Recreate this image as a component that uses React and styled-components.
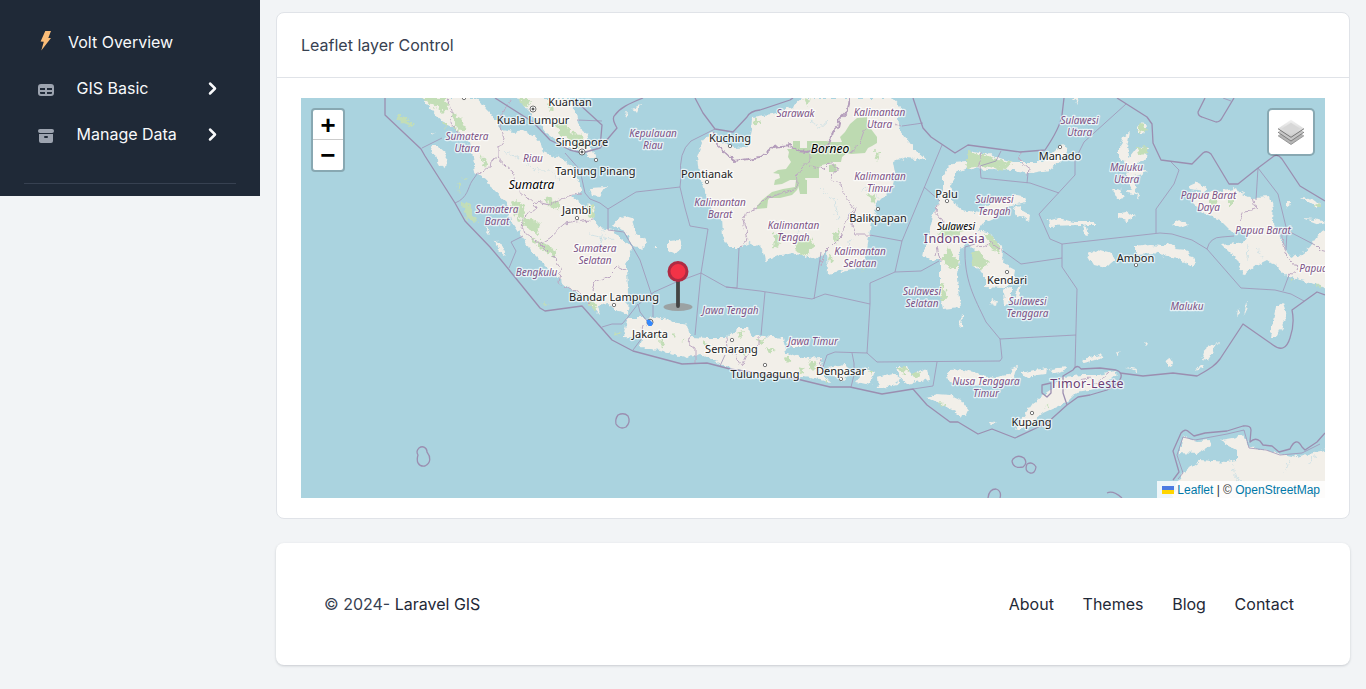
import React from "react";
import styled, { createGlobalStyle } from "styled-components";
import { HiTable, HiArchive, HiChevronRight } from "react-icons/hi";

const GlobalStyle = createGlobalStyle`
  *, *::before, *::after { box-sizing: border-box; }
  body {
    margin: 0;
    background: #f2f4f6;
    color: #374151;
    font: 400 16px/24px Inter, sans-serif;
    overflow: hidden;
  }
  a { text-decoration: none; }
`;

const Page = styled.div`
  display: flex;
  align-items: flex-start;
  height: 689px;
`;

const Sidebar = styled.nav`
  flex: 0 0 260px;
  height: 196px;
  padding: 19px 24px 0;
  background: #1f2937;
`;

const NavItem = styled.a`
  display: flex;
  align-items: center;
  height: 46px;
  padding: 0 11px 0 12px;
  color: #f8f9fb;
`;

const NavIcon = styled.span`
  display: flex;
  width: 20px;
  height: 20px;
  margin: ${(p) => (p.$brand ? "0 12px 2px 0" : "3px 20.5px 0 0")};
  color: #9ca3af;
`;

const NavLabel = styled.span`
  flex: 1;
`;

const Chevron = styled(HiChevronRight)`
  width: 25px;
  height: 25px;
`;

const Divider = styled.div`
  height: 1px;
  margin-top: 26px;
  background: #374151;
`;

const Main = styled.main`
  flex: 1;
  display: flex;
  flex-direction: column;
  gap: 24px;
  padding: 12px 16px 0;
`;

const Card = styled.section`
  height: 507px;
  background: #fff;
  border: 1px solid #e0e3e8;
  border-radius: 8px;
`;

const CardHeader = styled.header`
  height: 65px;
  padding: 20px 24px;
  border-bottom: 1px solid #e0e3e8;
`;

const MapFrame = styled.div`
  position: relative;
  height: 400px;
  margin: 20px 24px;
  overflow: hidden;
  background: #aad3df;
`;

const MapCanvas = styled.svg`
  display: block;
  width: 1024px;
  height: 400px;
`;

const ZoomControl = styled.div`
  position: absolute;
  top: 10px;
  left: 10px;
  width: 34px;
  border: 2px solid rgba(0, 0, 0, 0.2);
  border-radius: 4px;
  background: #fff;
  background-clip: padding-box;
`;

const ZoomButton = styled.a`
  display: block;
  height: 30px;
  border-bottom: ${(p) => (p.$first ? "1px solid #ccc" : "0")};
  color: #000;
  text-align: center;
  font: bold 26px/34px "Liberation Mono", monospace;
`;

const LayersControl = styled.div`
  position: absolute;
  top: 10px;
  right: 10px;
  display: grid;
  place-items: center;
  width: 48px;
  height: 48px;
  border: 2px solid rgba(0, 0, 0, 0.2);
  border-radius: 5px;
  background: #fff;
  background-clip: padding-box;
`;

const Attribution = styled.div`
  position: absolute;
  right: 0;
  bottom: 0;
  height: 17px;
  padding: 0 5px;
  background: rgba(255, 255, 255, 0.8);
  color: #333;
  font: 12px/18px "Liberation Sans", Arial, sans-serif;
  white-space: nowrap;
  a { color: #0078a8; }
  svg { margin-right: 3px; }
`;

const Footer = styled.footer`
  display: flex;
  align-items: center;
  justify-content: space-between;
  height: 122px;
  padding: 0 56px 0 48px;
  background: #fff;
  border-radius: 8px;
  box-shadow: 0 1px 3px rgba(31, 41, 55, 0.14), 0 1px 2px rgba(31, 41, 55, 0.06);
`;

const FooterLink = styled.a`
  color: #1f2937;
`;

const FooterLinks = styled.div`
  display: flex;
  gap: 28.7px;
`;

const Label = styled.text`
  font-family: "Noto Sans", sans-serif;
  text-anchor: middle;
  paint-order: stroke;
  stroke: rgba(255, 255, 255, 0.7);
  stroke-width: 2.6px;
  stroke-linejoin: round;
  font-size: ${(p) => ({ city: 11, region: 10, island: p.$size || 11, country: 12.5 }[p.$kind])}px;
  font-style: ${(p) => (p.$kind === "region" || p.$kind === "island" ? "italic" : "normal")};
  letter-spacing: ${(p) => (p.$kind === "country" ? "0.35px" : "0")};
  fill: ${(p) => ({ city: "#222", region: "#7c5285", island: "#000", country: "#6c3f75" }[p.$kind])};
`;

const LAND = [
  // Sumatra
  "422,98 432,110 442,122 457,130 468,140 473,157 475,173 487,180 493,190 507,203 513,223 522,237 533,253 547,267 563,282 580,297 590,304 600,315 598,306 607,304 613,307 620,312 627,315 628,293 627,267 628,258 632,248 623,240 613,230 600,228 593,220 595,205 584,206 573,197 582,190 575,170 563,160 543,152 540,140 523,130 513,132 503,130 487,110 477,98",
  // Malay peninsula
  "518,98 527,110 537,120 547,133 563,145 580,153 590,150 588,137 578,123 575,110 570,98",
  // Bangka, Belitung
  "612,227 618,219 625,216 632,218 635,233 648,242 645,249 633,247 625,232",
  "668,240 680,239 683,247 675,254 668,251",
  // Borneo
  "803,98 793,107 777,113 753,117 752,130 748,147 733,148 720,140 710,132 702,143 697,157 699,173 705,193 713,210 722,217 723,237 730,248 740,248 750,243 763,250 765,262 780,255 797,253 815,260 827,250 828,275 847,270 862,267 867,250 870,230 873,220 877,203 890,190 895,173 893,162 907,158 927,160 913,147 900,130 898,117 900,107 892,98",
  // Sulawesi
  "955,162 966,161 972,152 983,153 1013,162 1043,162 1054,152 1063,143 1068,147 1060,162 1050,170 1030,173 1013,170 967,168 955,173 950,190 953,203 962,210 980,213 990,202 1005,198 1017,195 1027,197 1025,203 1007,207 995,218 983,223 978,230 990,233 1003,250 1002,263 1015,270 1013,283 1003,288 985,287 985,273 972,265 975,250 967,242 960,250 957,277 960,308 943,310 940,293 940,260 935,260 923,257 925,247 933,217 937,203 943,190 943,177 950,165",
  // Java, Madura
  "628,318 647,318 657,317 667,320 677,323 688,325 692,337 707,338 727,338 738,328 748,328 752,335 783,338 787,353 803,358 823,357 822,370 830,382 803,377 780,377 757,375 730,368 713,360 700,354 687,358 660,350 640,348 642,338 623,337 625,328",
  "786,341 806,340 801,346 788,346",
  // Lesser Sunda islands
  "827,368 844,365 852,373 842,382 832,375",
  "855,382 867,368 875,372 870,385",
  "877,377 893,373 900,378 897,385 878,389",
  "897,367 907,367 911,376 927,368 929,379 907,384 900,378",
  "945,375 950,371 963,370 980,375 997,377 1013,374 1010,380 996,384 980,385 950,382",
  "1012,368 1018,366 1015,376 1010,376", "1021,373 1034,370 1047,368 1046,374 1024,377", "1049,369 1067,367 1065,371 1052,375",
  "925,397 937,394 950,395 961,400 968,410 965,417 950,410 938,403",
  "989,423 995,420 993,424",
  "1015,430 1033,403 1050,390 1063,377 1082,375 1100,375 1113,371 1117,374 1100,388 1077,392 1067,402 1043,413 1027,427",
  // Halmahera and the Moluccas
  "1130,132 1123,138 1119,150 1119,160 1125,162 1128,183 1140,200 1132,177 1148,172 1131,166 1147,158 1148,147 1137,148 1130,157 1127,148",
  "1138,126 1143,121 1147,126 1144,134 1138,134",
  "1118,213 1127,212 1135,217 1127,220 1118,218",
  "1172,224 1180,219 1188,225 1180,228",
  "1112,188 1121,190 1124,198 1117,199", "1128,190 1135,190 1134,194 1127,193",
  "1048,221 1058,218 1075,222 1095,222 1098,225 1079,225 1049,226", "1083,225 1086,226 1088,236 1085,234",
  "1087,254 1097,250 1112,254 1115,260 1106,267 1093,264",
  "1135,247 1150,245 1163,246 1168,243 1176,249 1187,250 1196,263 1193,267 1177,258 1153,253 1135,254",
  "1014,208 1020,206 1023,211 1030,215 1029,221 1021,215 1016,216",
  "1003,289 1011,286 1011,300 1004,307", "992,299 996,301 995,306 991,304", "1016,290 1021,285 1019,298 1014,304",
  "961,313 963,315 962,328 960,326",
  "1238,309 1240,314 1237,317", "1247,302 1249,304 1244,315", "1282,303 1286,315 1282,326 1277,337 1270,337 1273,320 1276,307",
  "1202,360 1206,347 1219,343 1214,350 1207,361", "1195,370 1204,364 1202,368", "1082,361 1088,357 1101,355 1104,358 1092,361 1084,363",
  "1126,367 1137,369 1136,371", "1166,360 1171,358 1173,364 1169,366", "1144,343 1148,342 1147,346", "1116,352 1120,354 1117,356",
  // Papua
  "1188,186 1197,182 1206,186 1205,191 1190,189",
  "1193,203 1196,192 1210,193 1233,188 1253,198 1270,197 1273,207 1272,220 1280,237 1287,253 1297,258 1310,247 1320,233 1329,229 1329,290 1310,282 1290,278 1277,267 1267,260 1257,265 1243,275 1238,260 1223,245 1243,242 1250,233 1243,230 1233,233 1220,220 1203,213",
  "1300,197 1311,198 1320,205 1316,207", "1302,218 1315,219 1325,222 1318,224", "1286,202 1290,202 1289,207 1286,206",
  // Australia
  "1178,452 1185,437 1197,441 1210,440 1211,445 1198,453",
  "1170,502 1182,473 1200,460 1227,462 1237,460 1237,450 1220,440 1232,438 1243,435 1250,447 1277,453 1297,457 1310,453 1329,449 1329,502",
  // Islands west of Sumatra
  "430,147 438,147 447,155 445,168 440,165", "484,227 491,232 489,234", "494,238 500,243 506,256 498,249", "432,131 435,132 432,134", "590,188 607,187 600,196 592,195",
  "587,148 593,151 596,158 588,157", "526,135 534,136 532,142 527,141", "638,246 643,246 641,249", "655,245 659,245 657,248", "624,113 628,112 626,116", "633,108 640,105 637,113", "1073,98 1077,98 1078,104",
];

const GREEN = [
  "422,98 445,98 449,106 443,113 436,107", "452,112 460,118 466,128 461,132 455,127", "442,122 447,122 446,129",
  "397,115 402,115 414,125 411,127 399,121", "463,203 468,202 478,222 469,221 464,214", "458,181 461,184 459,193", "462,177 468,178 465,180",
  "511,204 516,200 524,206 525,217 518,220", "520,220 531,218 540,224 538,234 527,229", "530,238 542,242 556,250 555,257 541,249",
  "546,198 550,197 560,205 558,210 549,207", "479,152 488,164 486,168", "587,207 594,205 595,219 588,216",
  "518,98 528,98 531,103 525,107", "556,124 566,122 569,132 580,134 588,146 578,148 570,139 560,136", "547,103 554,108 551,111", "584,298 589,296 597,306 595,310",
  "775,232 783,235 778,248 773,246", "797,240 811,239 814,246 806,257 796,250", "803,98 811,100 807,107", "833,234 840,230 836,245", "875,151 880,153 876,160", "866,194 877,197 873,203", "755,118 760,122 754,125", "829,255 833,258 830,264", "861,264 866,265 863,272",
  "966,163 969,152 982,154 1002,161 1012,162 1005,170 983,166 967,168", "938,233 947,226 964,232 958,236 944,237", "985,234 992,236 1001,248 999,253 991,249", "942,259 948,247 957,258 955,268 946,265", "973,252 978,249 988,263 979,269 972,263", "940,286 944,283 947,301 941,301", "944,260 959,260 957,268 951,268",
  "1210,199 1216,199 1217,205 1210,205", "1229,201 1233,201 1233,204 1229,204", "1317,203 1321,204 1320,207 1316,207", "1138,124 1143,123 1146,129 1141,133 1138,130", "1137,148 1148,147 1147,153 1138,154", "1290,278 1295,280 1292,282", "1314,284 1323,286 1320,288",
  "898,368 905,367 908,371 902,374", "913,374 920,372 922,377 914,379", "868,371 874,371 872,375", "938,403 945,404 944,406", "1046,406 1049,404 1044,411", "824,378 829,382 825,382", "541,303 548,304 546,306", "613,332 622,334 616,336",
  "660,340 666,343 662,348", "672,334 675,337 672,338", "682,338 685,339 683,342", "702,342 711,345 705,347", "735,333 744,331 740,337", "755,340 766,339 762,344", "764,347 777,350 770,353", "783,357 791,358 788,362", "808,360 818,364 812,370", "742,352 748,351 745,357", "798,367 805,369 799,373", "655,337 660,336 658,339",
];

// Inland Borneo parks have straight survey edges, so they stay undistorted.
const PARKS = [
  "842,142 840,137 845,132 850,124 857,118 867,117 867,128 871,129 877,137 877,143 872,146 868,148 865,153 851,154 847,153 842,157 841,162 833,162 822,165 822,166 819,167 819,178 805,178 806,182 800,183 797,190 792,195 780,198 766,198 772,194 768,200 767,208 757,209 757,206 762,200 772,192 783,189 795,187 796,180 790,180 782,184 774,185 775,180 780,178 779,174 773,173 778,170 786,169 791,162 788,157 789,152 787,149 793,149 793,141 800,141 800,148 807,148 807,141 826,141 832,142",
  "797,180 807,180 807,194 800,194", "829,165 836,164 837,172 829,172",
];

const LAND_BORDERS = [
  "M448 98 452 111 451 124 460 134 468 137",
  "M511 98 505 111 500 120 504 140 498 148 498 159 513 172 519 190 534 203 536 209 522 219 521 229 540 244 554 258 561 268 558 283 580 293 590 305",
  "M477 174 490 167 491 160 498 158",
  "M536 202 549 205 565 197 583 193", "M540 244 550 238 565 224 583 221 593 219",
  "M592 290 595 281 608 277 618 267 627 271",
  "M740 248 748 239 742 217 759 206 768 197 788 192 798 188 796 176 810 160 810 154",
  "M810 166 824 169 830 163 838 168 830 179 841 185 845 197 854 208 845 222 842 235 825 252 820 265",
  "M856 207 851 225 855 235 870 235", "M850 153 859 145 865 128", "M895 123 901 126",
  "M982 152 977 168", "M1021 152 1020 160 1029 168 1028 175", "M937 203 936 213 943 222 939 230 M935 255 937 246 940 261 M976 247 986 248 990 242 1003 251",
  "M1253 197 1256 209 1244 211 1239 222 M1281 232 1286 255 1297 268 1289 275", "M1315 245 1320 250 1328 252",
  "M640 338 643 326 648 324", "M691 336 690 345 695 348 695 361", "M727 338 728 349 735 355 741 366 747 353 759 346 759 337", "M823 357 819 366 827 372",
  "M1065 388 1078 380 1090 378 1095 384 1108 374",
];

const BORNEO_BORDER =
  "M713 133 717 145 727 154 735 161 760 157 773 147 790 145 798 151 807 152 828 147 832 133 838 127 840 118 848 110 850 96";

const THICK = [
  "M385 98V115L421 149 425 156 455 203 465 221 490 247 501 260 540 308 545 311 582 306 612 340 633 351 682 364 707 363 730 369 757 373 797 379 830 387 850 387 882 394 913 389 927 405 950 422 958 422 978 434 992 429 1015 438 1047 423 1067 405 1063 393 1063 376 1073 370C1076 365 1079 366 1081 369L1100 368 1116 370C1127 374 1119 384 1107 390L1090 395 1078 397 1067 405",
  "M1120 373 1143 376 1173 373 1197 376C1209 369 1215 366 1220 359L1243 324 1273 345Q1285 354 1290 338 1295 324 1292 310L1317 292 1325 295",
  "M495 98 533 122 550 140 570 150 582 153 600 148 617 128Q611 118 615 115C620 108 628 104 643 98",
  "M578 103 602 125 600 148", "M695 98 703 113 715 129 733 132 747 117Q750 111 760 110L790 100 793 98",
  "M913 98 923 128 931 137 955 153 968 145 1020 152 1045 150Q1060 128 1062 115L1064 98",
  "M1117 98 1147 117 1152 124 1153 143 1161 160 1192 164 1203 153Q1207 150 1211 154L1229 184H1238L1258 168 1274 156Q1278 154 1282 159L1300 186 1325 201",
  "M1205 98 1198 112Q1198 116 1202 117L1216 122Q1220 122 1222 118L1234 98",
  "M1173 480 1179 472 1173 451 1181 433Q1185 428 1189 432L1194 436 1205 433 1227 431 1243 426Q1251 425 1251 430L1250 442Q1255 437 1260 441L1263 445 1272 446 1279 452 1290 449Q1296 436 1302 447L1305 450 1317 442 1325 433",
  "M1042 385 1051 383 1051 393 1047 397 1042 393Z",
  "M618 415Q624 412 628 416 631 422 626 427 620 430 616 424 615 419 618 415Z",
  "M419 448C423 445 427 448 427 452 431 457 431 463 425 466 418 467 416 461 418 455 416 452 417 450 419 448Z",
  "M1013 459Q1018 454 1024 458 1028 463 1023 467 1013 469 1012 461Z", "M1027 464Q1033 461 1036 467 1035 474 1030 473 1024 471 1027 464Z", "M988 498Q989 489 996 489 1002 491 1000 498", "M1107 493Q1113 490 1122 498",
];

const THIN = [
  "M422 148 442 138", "M455 203C468 198 468 187 472 181L477 174", "M509 268 516 251 511 242 523 236",
  "M565 153 580 170 585 193 590 199 600 203 608 209 608 230 624 232 632 246 640 260 653 299 653 317",
  "M608 209 636 192 680 187 681 177Q678 152 691 141L715 129", "M680 187 685 208 690 226 708 229 701 273 695 335",
  "M577 120 602 121", "M739 248 737 288 726 287 701 273 674 283 654 292 639 304",
  "M726 287 760 291 812 299 825 294 870 304 870 283 895 272 902 241 942 145", "M821 252 814 299", "M870 235 902 241",
  "M924 187 940 201", "M895 272 921 271 939 261", "M870 304 867 353 877 362 1000 361 1002 358 1000 339 986 322C974 297 964 280 965 247L975 244",
  "M1000 339 1076 335", "M765 292 761 335", "M823 367 827 355 835 352 867 353", "M852 353Q855 362 854 375L851 387", "M937 362 933 386 913 389",
  "M902 126 923 123", "M1001 151 996 161 980 166 981 178 1030 183 1059 193", "M1028 173 1027 183",
  "M1126 104 1084 142 1075 160 1075 175 1039 214 1050 239 1062 244 1160 233 1172 234 1192 240 1207 249 1241 288 1275 290 1291 294 1304 301",
  "M1062 244 1062 267 1077 289 1075 368", "M1003 251 1021 264 1062 258", "M1170 161 1179 170 1174 184 1156 209 1156 233",
  "M1207 249Q1210 237 1222 237L1234 236", "M1258 168 1256 200", "M1258 168 1278 194 1287 231 1286 250", "M1290 232 1315 245",
  "M1289 275 1283 291",
  "M602 327 612 324 622 324 628 317 638 304 640 312 647 321", "M633 350 642 338", "M720 366 725 355", "M1223 98 1231 101",
  "M1178 479 1183 473 1177 455 1183 437 1195 440 1227 434 1244 430 1249 448 1266 450 1280 455 1302 453 1320 444",
];

const RIVERS = [
  "M504 152 520 158 537 170 551 170 560 180", "M545 148 553 155 565 158 572 170", "M585 252 600 245 603 230 M590 235 615 240", "M810 120 820 128 828 121",
  "M820 188 835 200 838 220", "M862 190 868 188 880 198", "M800 225 797 240 M778 220 782 238 M853 238 845 250", "M1248 245 1247 260 M1257 248 1262 258", "M1232 465 1236 478 1250 486 M1290 460 1285 472 M1315 455 1308 465",
];

const DOTS = [
  [533, 109, 1], [582, 152, 1], [596, 160], [577, 218], [614, 305], [730, 146], [707, 182], [878, 209], [947, 201], [1060, 147], [1007, 272], [1136, 265], [732, 340], [765, 365], [841, 379], [1032, 413], [464, 98],
];

const LABELS = [
  ["city", "Kuantan", 570, 106], ["city", "Kuala Lumpur", 533, 124], ["city", "Singapore", 582, 146], ["city", "Tanjung Pinang", 595.5, 175],
  ["city", "Jambi", 576.5, 214], ["city", "Bandar Lampung", 614, 301], ["city", "Jakarta", 650, 338], ["city", "Semarang", 731.5, 353],
  ["city", "Tulungagung", 765, 378], ["city", "Denpasar", 841, 375], ["city", "Kuching", 730, 142], ["city", "Pontianak", 707, 178],
  ["city", "Balikpapan", 878, 222], ["city", "Palu", 946.5, 197.5], ["city", "Manado", 1060, 160], ["city", "Kendari", 1007, 284],
  ["city", "Ambon", 1135.5, 261.5], ["city", "Kupang", 1031.5, 426],
  ["island", "Sumatra", 531.5, 189, 12], ["island", "Borneo", 830, 153, 12], ["island", "Sulawesi", 956, 230, 10],
  ["country", "Indonesia", 954.5, 243], ["country", "Timor-Leste", 1087, 388],
  ["region", "Sumatera", 467, 140], ["region", "Utara", 467, 152], ["region", "Riau", 533, 162],
  ["region", "Sumatera", 497, 213], ["region", "Barat", 497, 225], ["region", "Bengkulu", 536.5, 276],
  ["region", "Sumatera", 595, 252], ["region", "Selatan", 595, 264], ["region", "Kepulauan", 653, 137], ["region", "Riau", 653, 149],
  ["region", "Sarawak", 795.5, 117], ["region", "Kalimantan", 879.5, 116], ["region", "Utara", 879.5, 128],
  ["region", "Kalimantan", 720, 206], ["region", "Barat", 720, 218], ["region", "Kalimantan", 880, 180], ["region", "Timur", 880, 192],
  ["region", "Kalimantan", 793.5, 229], ["region", "Tengah", 793.5, 241], ["region", "Kalimantan", 860, 255], ["region", "Selatan", 860, 267],
  ["region", "Sulawesi", 1079.5, 124], ["region", "Utara", 1079.5, 136], ["region", "Sulawesi", 994.5, 202.5], ["region", "Tengah", 994.5, 214.5],
  ["region", "Sulawesi", 922, 295], ["region", "Selatan", 922, 307], ["region", "Sulawesi", 1027.5, 305], ["region", "Tenggara", 1027.5, 317],
  ["region", "Maluku", 1126.5, 170.5], ["region", "Utara", 1126.5, 182.5], ["region", "Papua Barat", 1208.5, 198.5], ["region", "Daya", 1208.5, 210.5],
  ["region", "Papua Barat", 1263, 234], ["region", "Papua", 1313.5, 272], ["region", "Maluku", 1187, 310],
  ["region", "Jawa Tengah", 730.5, 314], ["region", "Jawa Timur", 813, 345], ["region", "Nusa Tenggara", 986, 384.5], ["region", "Timur", 986, 396.5],
];

function MapArt() {
  return (
    <MapCanvas viewBox="301 98 1024 400">
      <defs>
        <filter id="coast" filterUnits="userSpaceOnUse" x="296" y="93" width="1034" height="410" colorInterpolationFilters="sRGB">
          <feTurbulence type="fractalNoise" baseFrequency="0.16" numOctaves="3" seed="4" />
          <feDisplacementMap in="SourceGraphic" scale="6.5" xChannelSelector="R" yChannelSelector="G" />
        </filter>
        <filter id="forest" filterUnits="userSpaceOnUse" x="296" y="93" width="1034" height="410" colorInterpolationFilters="sRGB">
          <feTurbulence type="fractalNoise" baseFrequency="0.25" numOctaves="3" seed="9" />
          <feDisplacementMap in="SourceGraphic" scale="8" xChannelSelector="R" yChannelSelector="G" />
        </filter>
      </defs>
      <g fill="#f2efe9" filter="url(#coast)">
        {LAND.map((p) => <polygon key={p} points={p} />)}
      </g>
      <g fill="#c3deb7" filter="url(#forest)">
        {GREEN.map((p) => <polygon key={p} points={p} />)}
      </g>
      <g fill="#bddab1">
        {PARKS.map((p) => <polygon key={p} points={p} />)}
      </g>
      <g fill="none" stroke="#b9d9e2" strokeWidth="0.6" filter="url(#forest)">
        {RIVERS.map((d) => <path key={d} d={d} />)}
      </g>
      <g fill="none" stroke="#bda8c2" strokeWidth="1" filter="url(#coast)">
        {LAND_BORDERS.map((d) => <path key={d} d={d} />)}
        <path d={BORNEO_BORDER} stroke="#b49dbb" strokeWidth="1.9" />
      </g>
      <g fill="none" stroke="#9f93b6" strokeWidth="0.8" strokeLinejoin="round">
        {THIN.map((d) => <path key={d} d={d} />)}
      </g>
      <g fill="none" stroke="#9b8eb0" strokeWidth="1.3" strokeLinejoin="round">
        {THICK.map((d) => <path key={d} d={d} />)}
      </g>
      {DOTS.map(([x, y, capital]) => (
        <g key={`${x}-${y}`} stroke="#555" strokeWidth="0.8" fill="#fff">
          <circle cx={x} cy={y} r={capital ? 3 : 1.7} />
          {capital && <circle cx={x} cy={y} r="1.1" fill="#444" />}
        </g>
      ))}
      {LABELS.map(([kind, text, x, y, size]) => (
        <Label key={`${text}-${x}-${y}`} $kind={kind} $size={size} x={x} y={y}>{text}</Label>
      ))}
      <circle cx="650" cy="322.2" r="3" fill="#fff" stroke="#444" strokeWidth="0.8" />
      <path d="M646.5 319.5 650 320 653 323 651.5 326H648.5L647 323Z" fill="#3388ff" />
      <ellipse cx="678" cy="307" rx="14.5" ry="4" fill="#999" opacity="0.85" />
      <path d="M678 279V306" stroke="#444" strokeWidth="3.8" strokeLinecap="round" />
      <circle cx="678" cy="271.5" r="9" fill="#f23347" stroke="#af2b43" strokeWidth="3" />
    </MapCanvas>
  );
}

function LayersIcon() {
  return (
    <svg width="26" height="26" viewBox="0 0 26 26">
      <defs>
        <linearGradient id="sheet" x1="0" y1="0" x2="0" y2="1">
          <stop offset="0" stopColor="#f2f2f2" />
          <stop offset="1" stopColor="#c9c9c9" />
        </linearGradient>
      </defs>
      <path d="M0 16.5 13 7.5 26 16.5 13 25.5Z" fill="#b5b5b5" />
      <path d="M0 16.7 13 25.5 26 16.7" fill="none" stroke="#858585" strokeWidth="0.8" />
      <path d="M0 13 13 4 26 13 13 22Z" fill="#c6c6c6" />
      <path d="M0 13.2 13 22 26 13.2" fill="none" stroke="#777" strokeWidth="0.9" />
      <path d="M0 9.5 13 .8 26 9.5 13 18.3Z" fill="url(#sheet)" />
      <path d="M4 9.5 13 3.8 22 9.5 13 15.5Z" fill="#d7d7d7" />
      <path d="M0 9.7 13 18.3 26 9.7" fill="none" stroke="#777" strokeWidth="1" />
    </svg>
  );
}

export default function App() {
  return (
    <>
      <GlobalStyle />
      <Page>
        <Sidebar>
          <NavItem>
            <NavIcon $brand>
              <svg width="20" height="20" viewBox="0 0 20 20">
                <path d="M9.3 0H15L12.3 7H15L5.3 19.5 7.8 10.8 4.6 10.5Z" fill="#fbbd78" />
              </svg>
            </NavIcon>
            <NavLabel>Volt Overview</NavLabel>
          </NavItem>
          <NavItem>
            <NavIcon><HiTable size={20} /></NavIcon>
            <NavLabel>GIS Basic</NavLabel>
            <Chevron />
          </NavItem>
          <NavItem>
            <NavIcon><HiArchive size={20} /></NavIcon>
            <NavLabel>Manage Data</NavLabel>
            <Chevron />
          </NavItem>
          <Divider />
        </Sidebar>
        <Main>
          <Card>
            <CardHeader>Leaflet layer Control</CardHeader>
            <MapFrame>
              <MapArt />
              <ZoomControl>
                <ZoomButton $first>+</ZoomButton>
                <ZoomButton>−</ZoomButton>
              </ZoomControl>
              <LayersControl><LayersIcon /></LayersControl>
              <Attribution>
                <svg width="12" height="8" viewBox="0 0 12 8">
                  <path fill="#4c7be1" d="M0 0h12v4H0z" />
                  <path fill="#ffd500" d="M0 4h12v4H0z" />
                </svg>
                <a>Leaflet</a> | © <a>OpenStreetMap</a>
              </Attribution>
            </MapFrame>
          </Card>
          <Footer>
            <span>© 2024- <FooterLink>Laravel GIS</FooterLink></span>
            <FooterLinks>
              <FooterLink>About</FooterLink>
              <FooterLink>Themes</FooterLink>
              <FooterLink>Blog</FooterLink>
              <FooterLink>Contact</FooterLink>
            </FooterLinks>
          </Footer>
        </Main>
      </Page>
    </>
  );
}
